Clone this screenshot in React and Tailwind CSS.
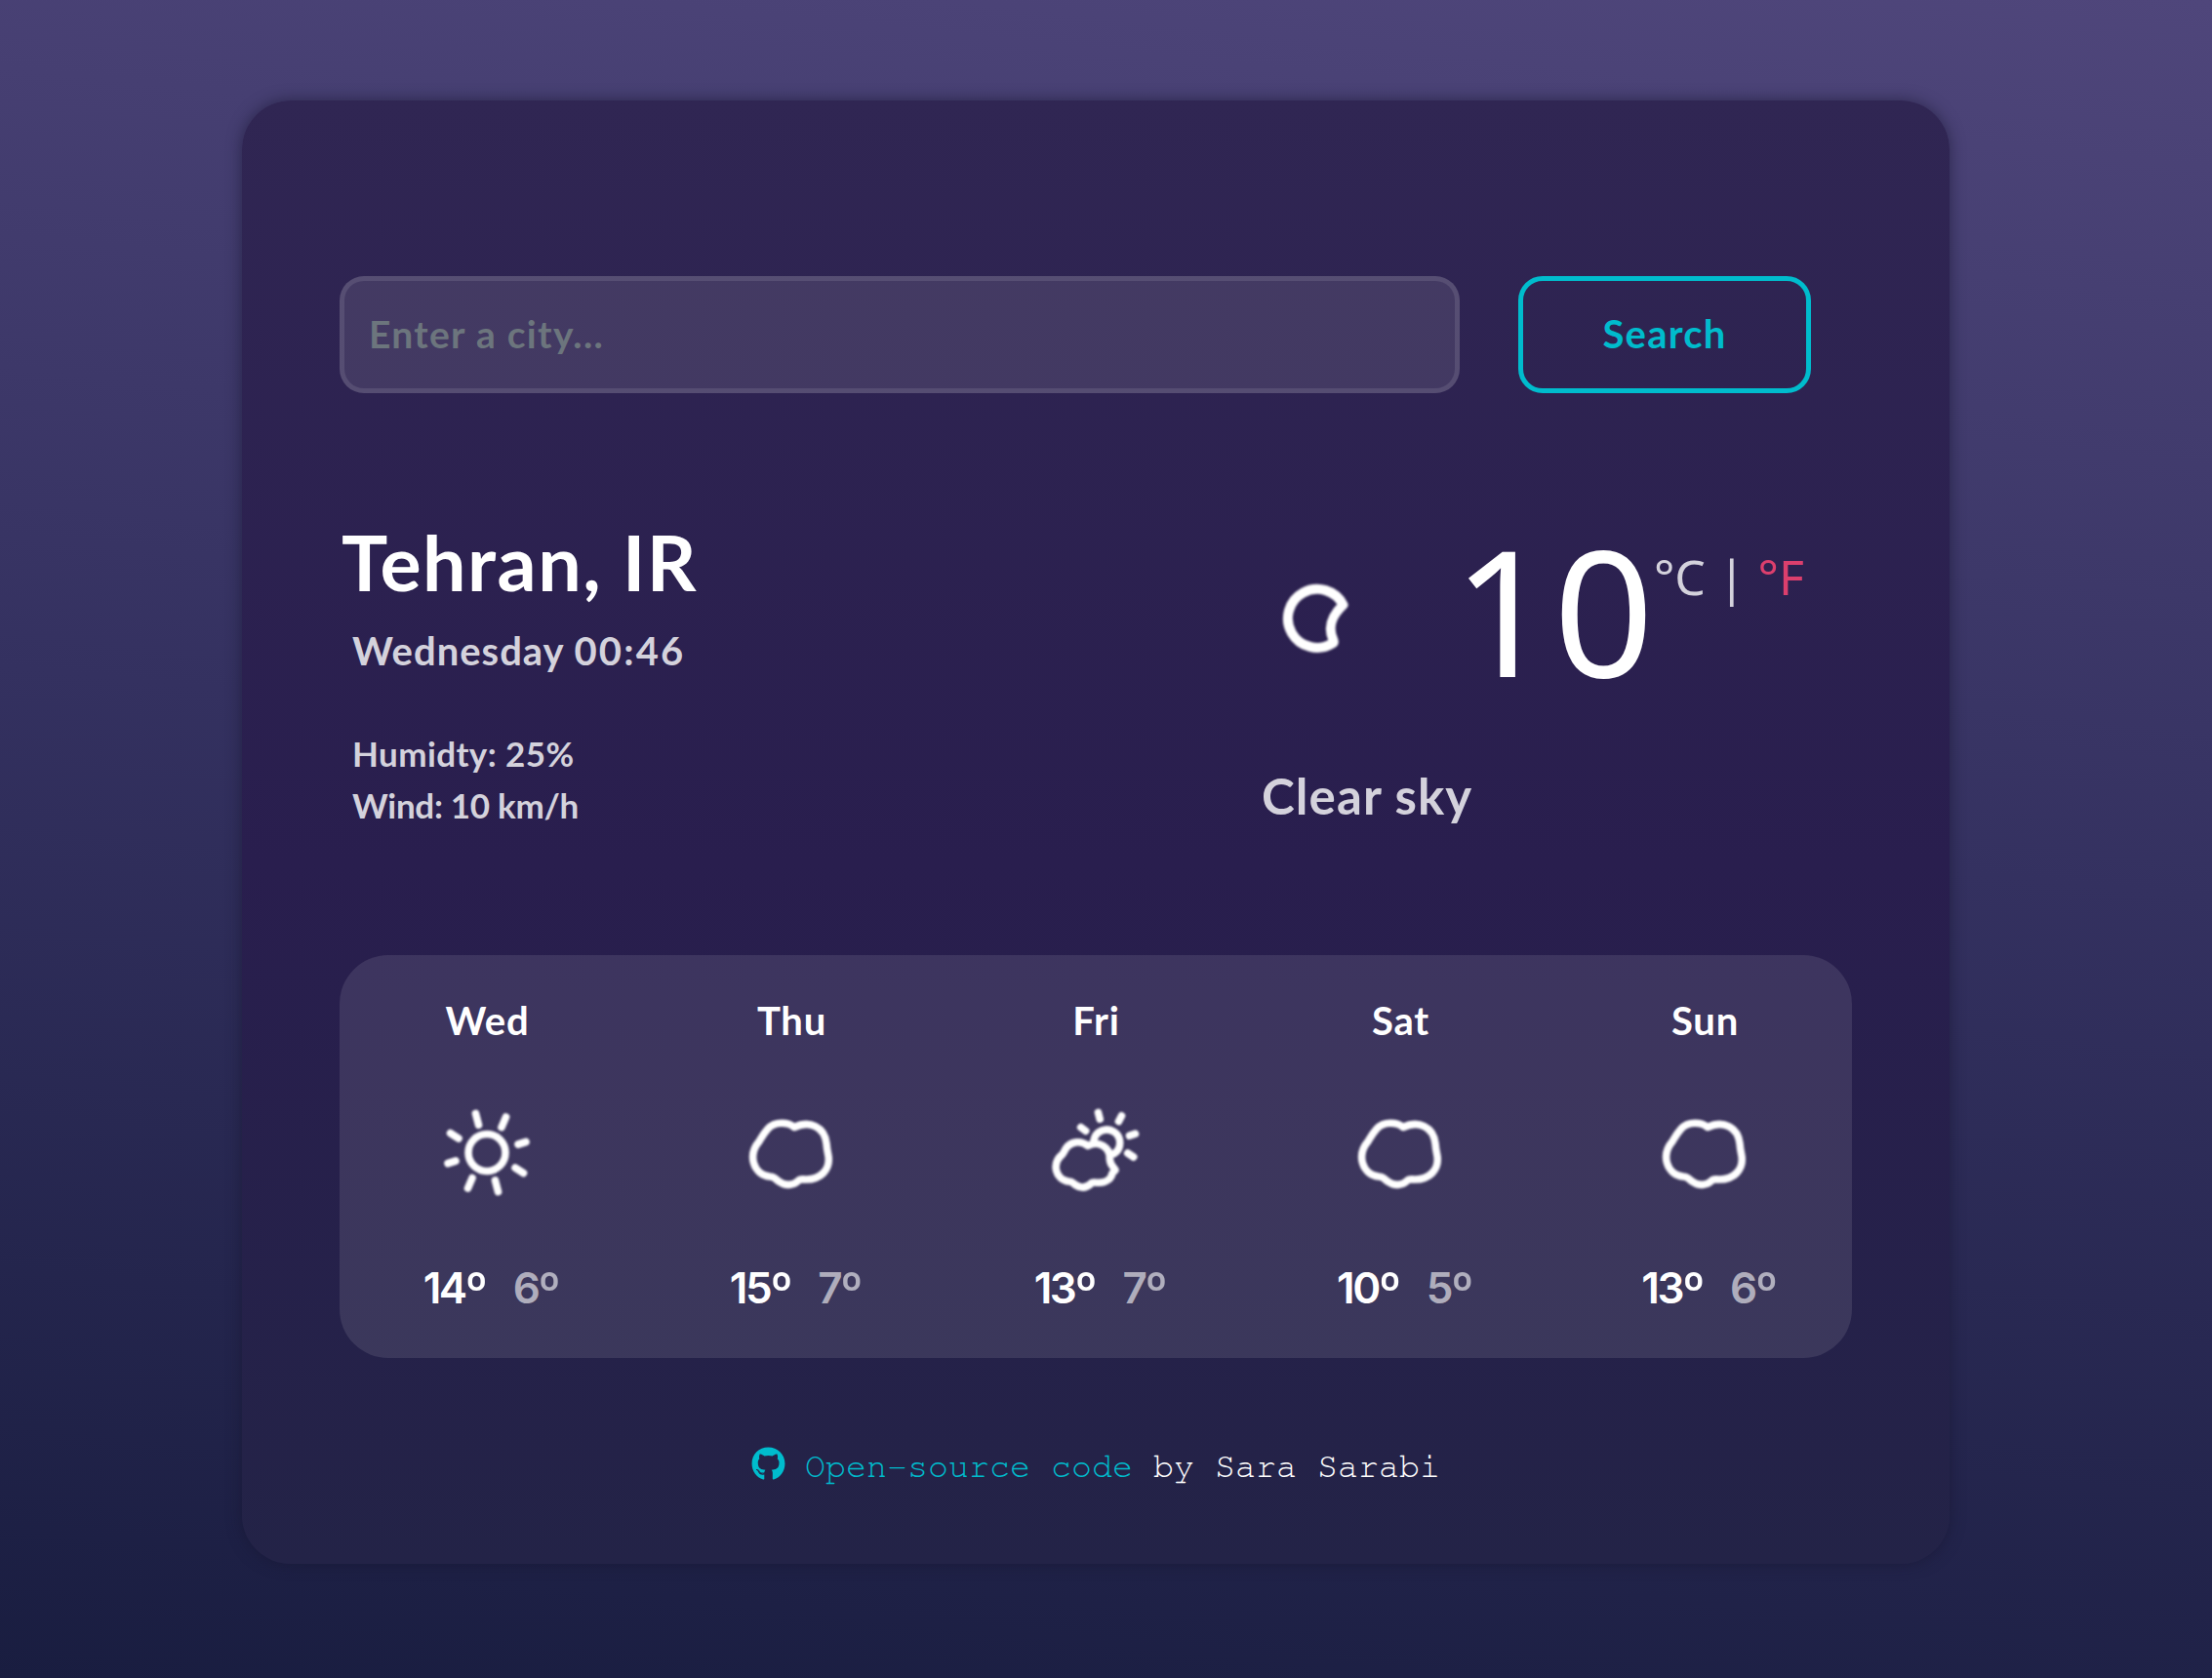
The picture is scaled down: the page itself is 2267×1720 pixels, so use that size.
import { FaGithub } from "react-icons/fa";

const days = [
  { day: "Wed", icon: "sun", hi: 14, lo: 6 },
  { day: "Thu", icon: "cloud", hi: 15, lo: 7 },
  { day: "Fri", icon: "partly", hi: 13, lo: 7 },
  { day: "Sat", icon: "cloud", hi: 10, lo: 5 },
  { day: "Sun", icon: "cloud", hi: 13, lo: 6 },
];

function Icon({ name }) {
  return (
    <svg
      className="h-[150px] w-[150px] overflow-visible blur-[0.8px]"
      viewBox="0 0 150 150"
      fill="none"
      stroke="white"
      strokeWidth="7.6"
      strokeLinecap="round"
      strokeLinejoin="round"
    >
      {name === "sun" && (
        <>
          <circle cx="75" cy="75.500" r="19" />
          <path d="M63.500 35.5l3 11.5M94.500 39l-4.5 10.5M115 64.5l-8 2.5M112.500 96.5l-8.500-5.5M86.500 115.500l-3-11.5M55.500 112l4.5-10.5M35 86.500l8-2.5M37.5 55.5l8.500 5.5" />
        </>
      )}
      {name === "cloud" && (
        <path d="M78 49.500C72 44 58 43 51 51C46.500 56 45 59 42 64C30 78 36 98 53 100C58 100 59 103 63 105.500C69 110 77 109 82 104.500C84 102 86 103 90 103C105 103 115 93 113 79C112 74 111.500 72 111 66C109 49 94 42 78 49.500Z" />
      )}
      {name === "partly" && (
        <>
          <path d="M73 63A13.500 13.500 0 1 1 93.700 76.700" />
          <path d="M59.700 49.500l5 3.800M77.500 34.500l1.700 6.500M101.500 37.800l-3 5.700M115.500 56.200l-6 2M107.700 76l6 4" />
          <path d="M67 68.500C60 63 50 63.500 44.500 71C43 73.500 42.500 75 41 77C29 87 34 103 47 105C51 105 52 107 54 108.500C60 112.500 66 111.500 71 106.500C73 105.500 76 106.500 79 106.300C86 106 91 102 92 96.500L95 93.300C93 89.500 89.700 89 89.300 81.500C90 70 78 62.500 67 68.500Z" />
        </>
      )}
      {name === "moon" && (
        <path
          strokeWidth="10"
          d="M102.500 62A30 30 0 1 0 91.500 101.500C92.500 101 93 100 92.500 98.500C86 84 91 73 102.500 62Z"
        />
      )}
    </svg>
  );
}

export default function App() {
  return (
    <div className="h-[1720px] w-full bg-[linear-gradient(186deg,#4f467b_0%,#343160_47%,#191d40_100%)] pt-[103px] pl-[248px] font-['Lato','Noto_Sans',sans-serif] font-bold text-white">
      <main className="h-[1500px] w-[1750px] rounded-[50px] bg-[linear-gradient(180deg,#302653_0%,#291e4e_52%,#232347_100%)] px-[100px] pt-[180px] shadow-[0_0_15px_rgba(24,22,48,0.6)]">
        <form className="flex gap-[60px]">
          <input
            className="h-[120px] w-[1148px] rounded-[25px] border-[5px] border-white/10 bg-white/10 px-[25px] pb-[2px] text-[39px] tracking-[1.3px] placeholder:text-[#6c757d]"
            placeholder="Enter a city..."
          />
          <button
            type="button"
            className="h-[120px] w-[300px] rounded-[25px] border-[5px] border-[#00bccd] pb-[2px] text-[40px] tracking-[1.2px] text-[#00bccd]"
          >
            Search
          </button>
        </form>

        <section className="flex h-[576px] justify-between">
          <div className="pt-[125px]">
            <h1 className="pl-[2px] text-[79px] leading-[96px] tracking-[1.5px]">Tehran, IR</h1>
            <div className="pl-[13px] text-[#d4d2dc]">
              <p className="mt-[16px] text-[40px] leading-[54px] tracking-[1px]">
                Wednesday <span className="tracking-[2.2px]">00:46</span>
              </p>
              <p className="mt-[52px] text-[35px] leading-[53px] tracking-[0.4px]">Humidty: 25%</p>
              <p className="text-[35px] leading-[53px] tracking-[-0.3px]">Wind: 10 km/h</p>
            </div>
          </div>
          <div className="w-[604px] pt-[132px]">
            <div className="flex h-[180px] font-['Noto_Sans',sans-serif] font-normal">
              <div className="mt-[23px] -ml-[20px]">
                <Icon name="moon" />
              </div>
              <div className="ml-[65px] text-[180px] leading-[180px]">10</div>
              <div className="mt-[22px] text-[50px] leading-[68px] text-[#d4d2dc]">
                °C | <span className="text-[#dc3f6d]">°F</span>
              </div>
            </div>
            <p className="mt-[69px] -ml-[1px] text-[51px] leading-[64px] tracking-[1.1px] text-[#d4d2dc]">Clear sky</p>
          </div>
        </section>

        <section className="grid h-[413px] grid-cols-5 gap-[10px] rounded-[50px] bg-[#ffffff1a] pt-[43px]">
          {days.map((d) => (
            <div key={d.day} className="flex flex-col items-center">
              <div className="pl-[1px] text-[40px] leading-[48px] tracking-[0.8px]">{d.day}</div>
              <div className="mt-[36px]">
                <Icon name={d.icon} />
              </div>
              <div className="mt-[37px] flex gap-[28px] pl-[8px] font-['Inter',sans-serif] text-[44px] leading-[54px] font-semibold tracking-[-2.5px]">
                <span>{d.hi}<span className="align-[-4px] text-[50px] leading-none">º</span></span>
                <span className="text-white/60">{d.lo}<span className="align-[-4px] text-[50px] leading-none">º</span></span>
              </div>
            </div>
          ))}
        </section>

        <footer className="mt-[86px] flex items-center justify-center font-['FreeMono','Nimbus_Mono_PS','Courier_Prime','Liberation_Mono',monospace] text-[35px] font-normal">
          <FaGithub className="mr-[20px] mb-[7px] text-[#00bccd]" />
          <span className="whitespace-pre text-[#00bccd]">Open-source code </span>
          <span>by Sara Sarabi</span>
        </footer>
      </main>
    </div>
  );
}
